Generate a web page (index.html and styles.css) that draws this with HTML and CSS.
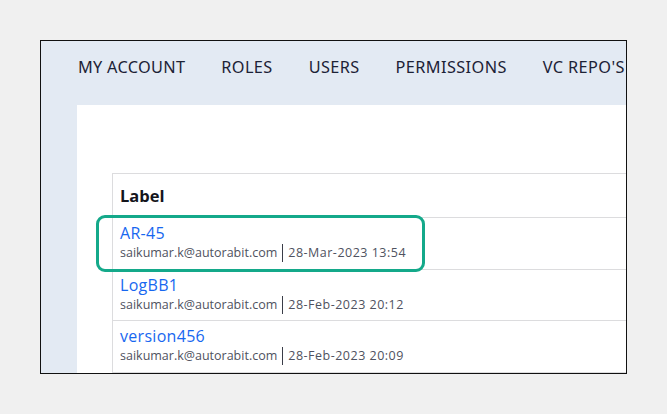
FILE: index.html
```html
<!DOCTYPE html>
<html>
<head>
<meta charset="utf-8">
<link rel="stylesheet" href="styles.css">
</head>
<body>
<div class="frame">
  <nav class="tabs">
    <span class="tab">MY ACCOUNT</span>
    <span class="tab">ROLES</span>
    <span class="tab">USERS</span>
    <span class="tab">PERMISSIONS</span>
    <span class="tab">VC REPO'S</span>
  </nav>
  <div class="panel">
    <div class="table">
      <div class="row head"><span class="label">Label</span></div>
      <div class="row">
        <a class="link">AR-45</a>
        <div class="meta"><span>saikumar.k@autorabit.com</span><span class="sep"></span><span class="date">28-Mar-2023 13:54</span></div>
      </div>
      <div class="row">
        <a class="link">LogBB1</a>
        <div class="meta"><span>saikumar.k@autorabit.com</span><span class="sep"></span><span class="date">28-Feb-2023 20:12</span></div>
      </div>
      <div class="row">
        <a class="link">version456</a>
        <div class="meta"><span>saikumar.k@autorabit.com</span><span class="sep"></span><span class="date">28-Feb-2023 20:09</span></div>
      </div>
    </div>
  </div>
  <div class="highlight"></div>
</div>
</body>
</html>
```

FILE: styles.css
```css
* { box-sizing: border-box; }
html, body { margin: 0; padding: 0; }
body {
  background: #f0f0f0;
  width: 667px;
  height: 414px;
  padding: 40px 0 0 40px;
  font-family: "Open Sans", "Liberation Sans", sans-serif;
}
.frame {
  position: relative;
  width: 587px;
  height: 334px;
  border: 1px solid #111;
  background: #e3eaf3;
  overflow: hidden;
  display: flex;
  flex-direction: column;
}
.tabs {
  display: flex;
  gap: 36px;
  height: 64px;
  padding: 15px 0 0 37px;
  white-space: nowrap;
  font-family: "Noto Sans", "Liberation Sans", sans-serif;
  font-size: 16.3px;
  color: #1c2236;
  letter-spacing: 0.4px;
}
.tab:first-child { letter-spacing: 0.3px; }
.panel {
  flex: 1;
  margin-left: 36px;
  width: 620px;
  background: #fff;
  padding: 68px 0 0 35px;
}
.table {
  border-left: 1px solid #dcdcde;
  border-top: 1px solid #dcdcde;
}
.row {
  border-bottom: 1px solid #dcdcde;
  padding: 4px 0 0 7px;
  height: 52px;
}
.row:nth-child(3) { height: 51px; }
.row.head {
  height: 44px;
  padding-top: 10px;
}
.label {
  font-weight: 700;
  font-size: 16.5px;
  color: #14151c;
}
.link {
  display: block;
  color: #1767f0;
  font-size: 16px;
  letter-spacing: 0.3px;
  line-height: 22px;
}
.meta {
  display: flex;
  align-items: center;
  font-size: 12.5px;
  line-height: 18px;
  color: #4f5260;
  white-space: nowrap;
}
.date { letter-spacing: 0.5px; }
.sep {
  width: 1px;
  height: 18px;
  background: #3a3d48;
  margin: 0 5px;
}
.highlight {
  position: absolute;
  left: 55px;
  top: 174px;
  width: 329px;
  height: 57px;
  border: 3px solid #14a98a;
  border-radius: 9px;
}
```
